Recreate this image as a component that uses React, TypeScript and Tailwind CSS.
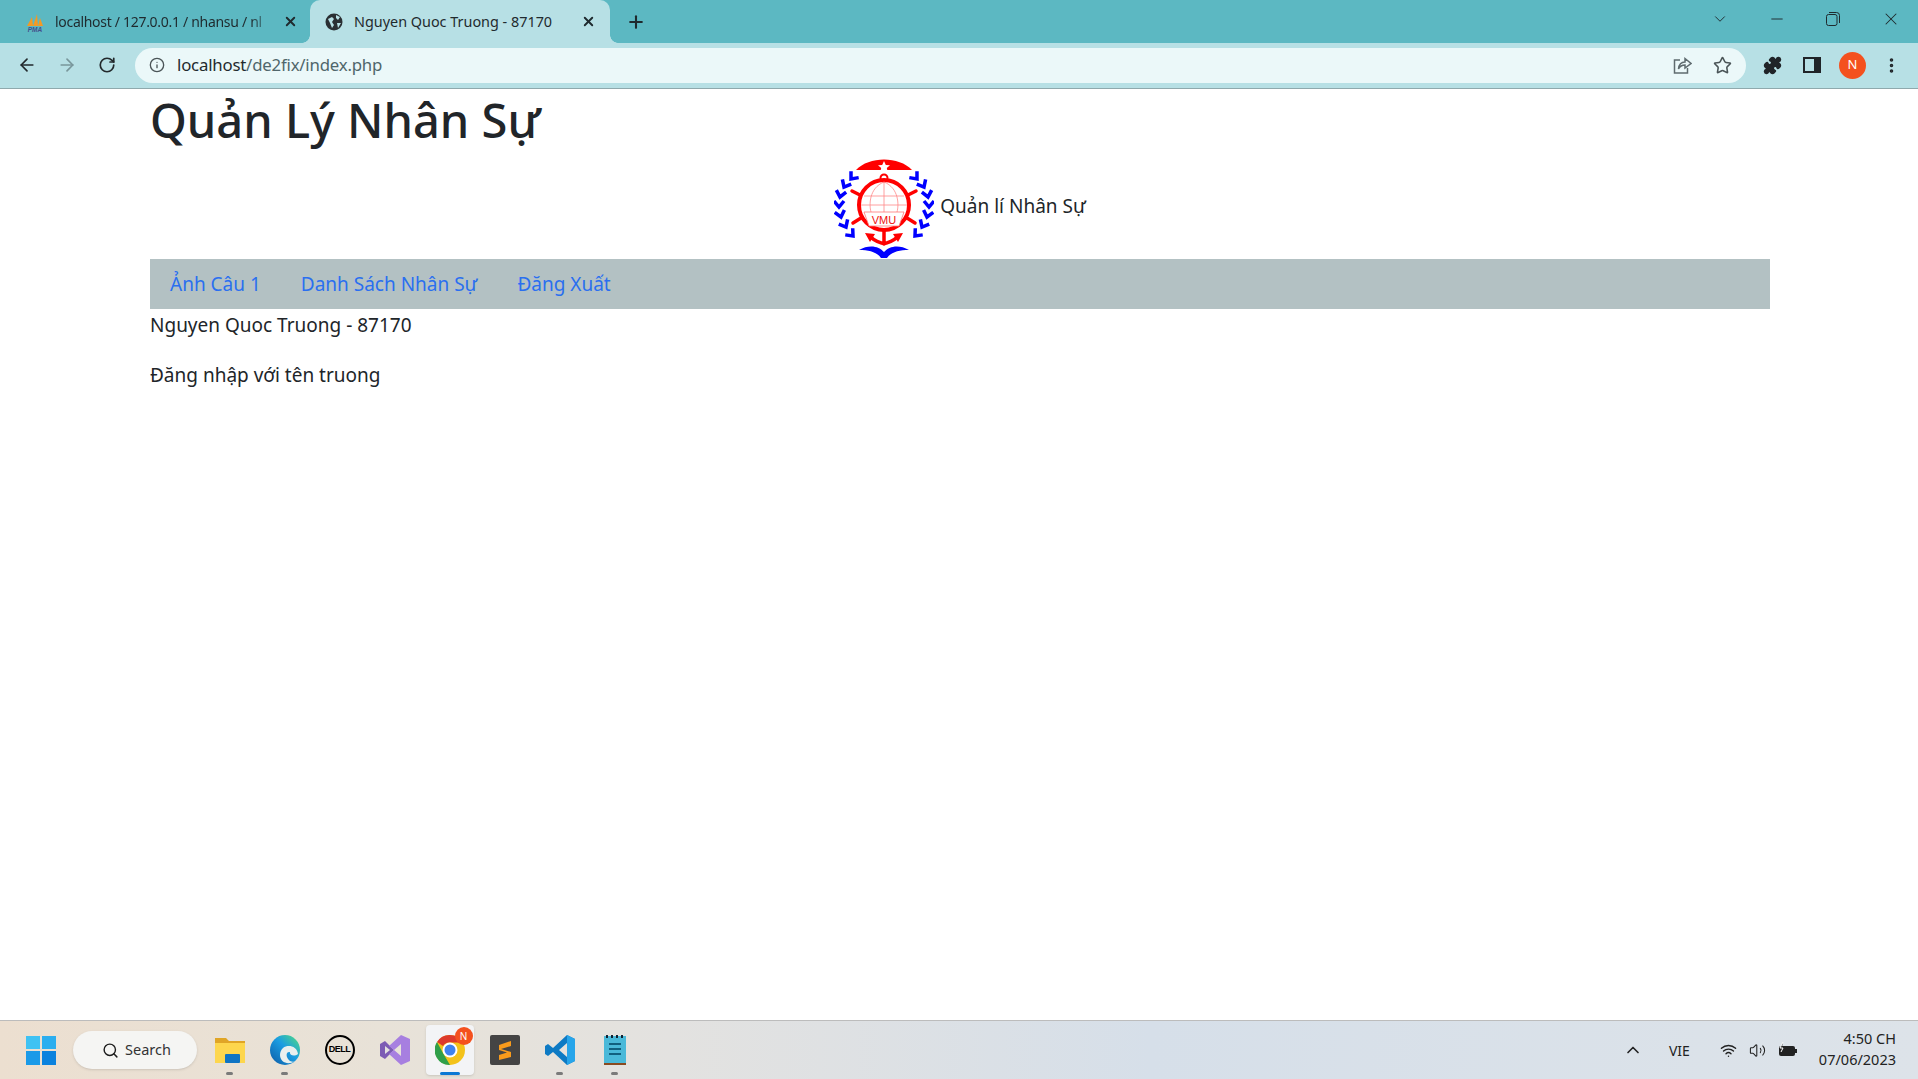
import { ArrowLeft, ArrowRight, RotateCw, Info, Star, Plus, X, Minus, ChevronDown, ChevronUp, Search, Wifi, Volume2, Puzzle, MoreVertical } from "lucide-react"

const FONT = "font-['Noto_Sans','Open_Sans',sans-serif]"

// points along the wreath: x, y, rotation
const LAUREL = [
  [32, 29, 40],
  [25, 37, 28],
  [21, 47, 12],
  [20, 57, 0],
  [22, 67, -14],
  [27, 77, -28],
  [34, 86, -42],
]

function VmuLogo() {
  return (
    <svg width="100" height="100" viewBox="15 9 100 100" className="shrink-0">
      {/* red cap with star */}
      <path d="M37 20 C50 6 80 6 93 20 Z" fill="#f00" />
      <path d="M65 11 l1.800 4 4.200.3 -3.200 2.800 1 4.200 -3.800-2.300 -3.800 2.300 1-4.200 -3.200-2.800 4.200-.3z" fill="#fff" />
      {/* wheel */}
      <path d="M41 45 L33 41 M89 45 L97 41 M42 68 L34 73 M88 68 L96 73" stroke="#f00" strokeWidth="3.500" strokeLinecap="round" />
      <circle cx="65" cy="55" r="25" fill="#fff" stroke="#f00" strokeWidth="4" />
      <circle cx="65" cy="28" r="3.500" fill="none" stroke="#f00" strokeWidth="2" />
      {/* globe lines */}
      <path d="M65 32 V62 M45 46 H85 M42 55 H88 M65 32 C50 38 50 55 52 62 M65 32 C80 38 80 55 78 62" fill="none" stroke="#f88" strokeWidth="0.800" />
      <path d="M45 62 H85 L80 76 H50 Z" fill="#fff" stroke="#f77" strokeWidth="0.800" />
      <text x="65" y="74" textAnchor="middle" fontSize="11" fill="#e11" fontFamily="'Liberation Sans',sans-serif">VMU</text>
      {/* anchor */}
      <path d="M65 78 V94 M50 85 C54 91 60 92 65 94 C70 92 76 91 80 85" fill="none" stroke="#f00" strokeWidth="3.500" />
      <path d="M46 83 L56 84 L51 92 Z M84 83 L74 84 L79 92 Z" fill="#f00" />
      {/* laurel, second half mirrored */}
      <g fill="none" stroke="#00f" strokeWidth="3.500">
        {LAUREL.map(([x, y, r]) => (
          <path key={y} d="M-5 -6 L0 0 L5 -6" transform={`translate(${x} ${y}) rotate(${r})`} />
        ))}
        <g transform="translate(130 0) scale(-1 1)">
          {LAUREL.map(([x, y, r]) => (
            <path key={y} d="M-5 -6 L0 0 L5 -6" transform={`translate(${x} ${y}) rotate(${r})`} />
          ))}
        </g>
      </g>
      {/* ribbon */}
      <path d="M40 100 C50 94 60 96 65 102 C70 96 80 94 90 100 C80 100 72 102 68 108 H62 C58 102 50 100 40 100 Z" fill="#00f" />
    </svg>
  )
}

function PmaIcon() {
  return (
    <svg width="20" height="20" viewBox="0 0 20 20" className="shrink-0">
      <path d="M2 14 L7 5 L8 14 Z M8 14 L12 2 L13 14 Z M13 14 L15 6 L18 14 Z" fill="#f39a25" />
      <text x="10" y="19.500" textAnchor="middle" fontSize="6.500" fontWeight="700" fontStyle="italic" fill="#44508c" fontFamily="'Liberation Sans',sans-serif">PMA</text>
    </svg>
  )
}

function GlobeIcon() {
  return (
    <svg width="18" height="18" viewBox="0 0 18 18" className="shrink-0">
      <circle cx="9" cy="9" r="8.500" fill="#2a2f33" />
      <path d="M3 6 L7 4 L9 6 L7 9 L9 12 L7 15 L5 10 Z M11 2 L15 4 L13 7 L11 5 Z M12 10 L16 10 L13 15 Z" fill="#b7e0e5" />
    </svg>
  )
}

function ShareIcon() {
  return (
    <svg width="20" height="20" viewBox="0 0 20 20" fill="none" stroke="#5f6b6f" strokeWidth="1.500">
      <path d="M8 5 H2.500 V18 H15.500 V13" />
      <path d="M6.500 14 C7 9 10 7 13 7 V3.500 L19 8.500 L13 13 V10 C10.500 10 8 11 6.500 14 Z" />
    </svg>
  )
}

function SidePanelIcon() {
  return (
    <svg width="18" height="18" viewBox="0 0 18 18">
      <rect width="18" height="16" y="1" fill="#202428" />
      <rect x="2" y="3" width="9" height="12" fill="#b7e0e5" />
    </svg>
  )
}

function RestoreIcon() {
  return (
    <svg width="14" height="14" viewBox="0 0 14 14" fill="none" stroke="#1f2a2e" strokeWidth="1">
      <rect x="0.500" y="2.500" width="10.500" height="11" rx="2" />
      <path d="M3 0.500 H10.500 A3 3 0 0 1 13.500 3.500 V11" />
    </svg>
  )
}

function BrowserChrome() {
  return (
    <header className="shrink-0">
      <div className="h-[43px] bg-[#5cb8c2] flex items-end pl-[12px]">
        <div className="w-[298px] h-[43px] flex items-center pl-[13px] pr-[12px] gap-[10px]">
          <PmaIcon />
          <span className="flex-1 overflow-hidden whitespace-nowrap text-[14px] tracking-[-0.3px] text-[#1f2a2e] [mask-image:linear-gradient(90deg,#000_90%,transparent_100%)]">localhost / 127.0.0.1 / nhansu / nl</span>
          <X size={15} strokeWidth={3} className="text-[#1f2a2e] shrink-0" />
        </div>
        <div className="relative w-[300px] h-[43px] bg-[#b7e0e5] rounded-t-[10px] flex items-center pl-[15px] pr-[14px] gap-[11px]">
          <GlobeIcon />
          <span className="flex-1 overflow-hidden whitespace-nowrap text-[14.400px] text-[#1f2a2e]">Nguyen Quoc Truong - 87170</span>
          <X size={15} strokeWidth={3} className="text-[#1f2a2e] shrink-0" />
          <span className="absolute bottom-0 -left-[8px] w-[8px] h-[8px] bg-[radial-gradient(circle_at_0_0,transparent_7.500px,#b7e0e5_8px)]" />
          <span className="absolute bottom-0 -right-[8px] w-[8px] h-[8px] bg-[radial-gradient(circle_at_100%_0,transparent_7.500px,#b7e0e5_8px)]" />
        </div>
        <div className="h-[43px] flex items-center ml-[16px]">
          <Plus size={20} strokeWidth={2.500} className="text-[#1f2a2e]" />
        </div>
        <div className="flex-1" />
        <div className="h-[38px] flex items-center self-start text-[#1f2a2e]">
          <ChevronDown size={18} strokeWidth={1.250} />
          <Minus size={18} strokeWidth={1.250} className="ml-[39px]" />
          <span className="ml-[40px]"><RestoreIcon /></span>
          <X size={20} strokeWidth={1.250} className="ml-[41px] mr-[17px]" />
        </div>
      </div>
      <div className="h-[46px] bg-[#b7e0e5] border-b border-[#8fa9ad] flex items-center pl-[17px] pb-[1px]">
        <ArrowLeft size={20} strokeWidth={2} className="text-[#22292c]" />
        <ArrowRight size={20} strokeWidth={2} className="text-[#79969b] ml-[20px]" />
        <RotateCw size={18} strokeWidth={2.250} className="text-[#22292c] ml-[21px]" />
        <div className="w-[1611px] h-[35px] ml-[19px] bg-[#ebf8f9] rounded-full flex items-center pl-[14px] pr-[14px] shrink-0">
          <Info size={16} strokeWidth={2} className="text-[#4b5558]" />
          <span className="ml-[12px] text-[16.800px] text-[#1f2a2e] tracking-[-0.2px]">localhost<span className="text-[#50666b]">/de2fix/index.php</span></span>
          <div className="flex-1" />
          <ShareIcon />
          <Star size={19} strokeWidth={2} className="text-[#4b5558] ml-[21px]" />
        </div>
        <Puzzle size={19} fill="#202428" className="text-[#202428] ml-[17px]" />
        <span className="ml-[21px]"><SidePanelIcon /></span>
        <div className="ml-[18px] w-[27px] h-[27px] rounded-full bg-[#f4511e] text-white text-[13px] flex items-center justify-center">N</div>
        <MoreVertical size={19} strokeWidth={2.500} className="text-[#202428] ml-[16px]" />
      </div>
    </header>
  )
}

function WindowsLogo() {
  return (
    <div className="grid grid-cols-2 gap-[1.500px] w-[30px] h-[29px]">
      <div className="bg-[#3fc2f3]" />
      <div className="bg-[#2baeef]" />
      <div className="bg-[#1a9ae8]" />
      <div className="bg-[#0b82de]" />
    </div>
  )
}

function TaskIcon({ children, dot }: { children: React.ReactNode; dot?: boolean }) {
  return (
    <div className="w-[55px] h-[50px] relative flex items-center justify-center">
      {children}
      {dot && <span className="absolute bottom-0 left-[24px] w-[7px] h-[3px] rounded-full bg-[#7a7a7a]" />}
    </div>
  )
}

function Taskbar() {
  return (
    <footer className="h-[59px] shrink-0 border-t border-[#bcbcbc] bg-[linear-gradient(90deg,#ecdfd0_0%,#e8e2d8_20%,#e3e2e0_35%,#d6dfe9_60%,#dde3e9_100%)] flex items-center relative">
      <div className="ml-[26px]"><WindowsLogo /></div>
      <div className="ml-[17px] w-[124px] h-[38px] rounded-full bg-[#f5f5f3] flex items-center pl-[29px] gap-[6px] shadow-sm">
        <Search size={17} strokeWidth={2} className="text-[#1c1c1c]" />
        <span className="text-[14.500px] text-[#333]">Search</span>
      </div>

      <div className="ml-[5px] flex items-center">
        <TaskIcon dot>
          <svg width="30" height="30" viewBox="0 0 30 30">
            <path d="M0 3 H11 L14 6 H30 V28 H0 Z" fill="#e0a526" />
            <rect y="8" width="30" height="20" fill="#fdd64d" />
            <rect x="10" y="19" width="15" height="9" rx="1" fill="#0f74c4" />
          </svg>
        </TaskIcon>
        <TaskIcon dot>
          <svg width="30" height="30" viewBox="0 0 30 30">
            <defs>
              <linearGradient id="edge" x1="0" y1="1" x2="1" y2="0">
                <stop offset="0" stopColor="#0c59a4" />
                <stop offset="0.55" stopColor="#1b9de2" />
                <stop offset="1" stopColor="#54e07a" />
              </linearGradient>
            </defs>
            <circle cx="15" cy="15" r="15" fill="url(#edge)" />
            <path d="M13 13 C18 9 27 11 28 19 C24 22 19 20 20 17 C16 16 15 22 20 26 C22 27 24 27 25 26 C18 31 10 27 10 20 C10 17 11 15 13 13 Z" fill="#e9efee" />
          </svg>
        </TaskIcon>
        <TaskIcon>
          <div className="w-[30px] h-[30px] rounded-full border-2 border-black flex items-center justify-center text-[9px] font-bold text-black tracking-[-0.5px] font-['Liberation_Sans',sans-serif]">DELL</div>
        </TaskIcon>
        <TaskIcon>
          <svg width="30" height="30" viewBox="0 0 30 30">
            <path d="M0 9 L5 6 L14 15 L5 24 L0 21 Z" fill="#7c5cb4" />
            <path d="M5 11 L10 15 L5 19 Z" fill="#e3e2e0" />
            <path d="M21 0 L30 4 V26 L21 30 L9 19 L14 15 L21 21 V9 L14 15 L9 11 Z" fill="#a77fe0" />
          </svg>
        </TaskIcon>
        <div className="w-[48px] h-[50px] mx-[3.500px] bg-[#f3f4f6] rounded-[4px] shadow-sm relative flex items-center justify-center">
          <svg width="30" height="30" viewBox="0 0 30 30">
            <circle cx="15" cy="15" r="15" fill="#f3c21a" />
            <path d="M15 0 A15 15 0 0 1 28 7.500 H15 A7.500 7.500 0 0 0 8 11 L2 7 A15 15 0 0 1 15 0 Z" fill="#dd3a2c" />
            <path d="M2 7 L8.500 19 L15 30 A15 15 0 0 1 2 7 Z" fill="#2f9f4a" />
            <circle cx="15" cy="15" r="7.500" fill="#fff" />
            <circle cx="15" cy="15" r="5.500" fill="#3f82ee" />
          </svg>
          <span className="absolute top-[2px] right-[1px] w-[18px] h-[18px] rounded-full bg-[#f4511e] text-white text-[10px] flex items-center justify-center">N</span>
          <span className="absolute bottom-0 left-[14px] w-[20px] h-[3px] rounded-full bg-[#0a78d4]" />
        </div>
        <TaskIcon>
          <svg width="30" height="30" viewBox="0 0 30 30">
            <rect width="30" height="30" rx="2" fill="#444" />
            <path d="M21 6 V11 L11 14 L21 17 V22 L9 25 V20 L17 17.500 L9 15 V10 Z" fill="#f89b1c" />
          </svg>
        </TaskIcon>
        <TaskIcon dot>
          <svg width="30" height="30" viewBox="0 0 30 30">
            <path d="M22 0 L30 4 V26 L22 30 L8 17 L3 21 L0 19 V11 L3 9 L8 13 Z M22 8 L14 15 L22 22 Z" fill="#0d7ac4" />
            <path d="M22 0 L30 4 V26 L22 30 Z" fill="#27a5ea" />
          </svg>
        </TaskIcon>
        <TaskIcon dot>
          <svg width="22" height="32" viewBox="0 0 22 32">
            <rect y="2" width="22" height="28" fill="#4ab9d9" />
            <rect y="29" width="22" height="2" fill="#8a4b20" />
            <path d="M3 1 v3 M8 1 v3 M13 1 v3 M18 1 v3" stroke="#123" strokeWidth="2" />
            <path d="M5 10 H17 M5 15 H17 M5 20 H17" stroke="#11607f" strokeWidth="2" />
          </svg>
        </TaskIcon>
      </div>

      <div className="flex-1" />
      <ChevronUp size={20} strokeWidth={2} className="text-[#222]" />
      <span className="ml-[26px] text-[14px] text-[#222]">VIE</span>
      <Wifi size={17} strokeWidth={2} className="ml-[30px] text-[#222]" />
      <Volume2 size={17} strokeWidth={1.500} className="ml-[12px] text-[#222]" />
      <svg width="20" height="16" viewBox="0 0 20 16" className="ml-[12px]">
        <rect x="1" y="4" width="16" height="10" rx="2" fill="#222" />
        <rect x="17" y="7" width="2" height="4" fill="#222" />
        <path d="M5 0 L2 6 H5 L3 10" stroke="#fff" strokeWidth="1" fill="#222" />
      </svg>
      <div className="ml-[21px] mr-[22px] text-right text-[14.500px] leading-[21px] text-[#222] -mt-[2px]">
        <div>4:50 CH</div>
        <div>07/06/2023</div>
      </div>
    </footer>
  )
}

export default function App() {
  return (
    <div className={`h-[1079px] w-[1918px] overflow-hidden flex flex-col bg-white ${FONT}`}>
      <BrowserChrome />
      <main className="flex-1 pl-[150px] pr-[148px] text-[#212529] text-[19px]">
        <h1 className="text-[47px] leading-[62px] font-medium">Quản Lý Nhân Sự</h1>
        <div className="flex items-center justify-center h-[108px] pt-[8px]">
          <VmuLogo />
          <span className="ml-[6px] -mt-[6px]">Quản lí Nhân Sự</span>
        </div>
        <nav className="h-[50px] bg-[#b3c1c3] flex items-center px-[20px] pt-[1px] gap-[40px] text-[#2a6ff0]">
          <a>Ảnh Câu 1</a>
          <a>Danh Sách Nhân Sự</a>
          <a>Đăng Xuất</a>
        </nav>
        <p className="pt-[2px] leading-[29px]">Nguyen Quoc Truong - 87170</p>
        <p className="mt-[21px] leading-[29px]">Đăng nhập với tên truong</p>
      </main>
      <Taskbar />
    </div>
  )
}
